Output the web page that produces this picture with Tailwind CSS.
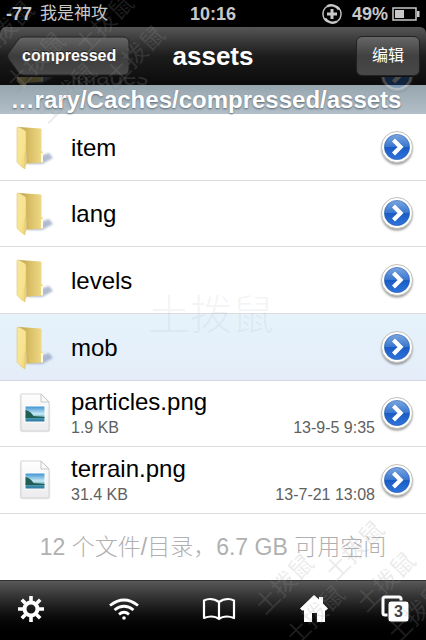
<!DOCTYPE html>
<html lang="zh-CN">
<head>
<meta charset="utf-8">
<meta name="viewport" content="width=device-width, initial-scale=1">
<title>assets</title>
<script src="https://cdn.jsdelivr.net/npm/@tailwindcss/browser@4"></script>
</head>
<body class="bg-white font-['Liberation_Sans','Noto_Sans_CJK_SC',sans-serif]">
<svg class="absolute size-0" aria-hidden="true">
  <defs>
    <linearGradient id="front" x1="0" y1="0" x2="1" y2="1"><stop offset="0" stop-color="#f6e6a0"/><stop offset=".6" stop-color="#f8e48e"/><stop offset="1" stop-color="#ecd072"/></linearGradient>
    <linearGradient id="back" x1="0" y1="0" x2="1" y2="0"><stop offset="0" stop-color="#b89c48"/><stop offset=".45" stop-color="#d9bf66"/><stop offset="1" stop-color="#f1dc8a"/></linearGradient>
    <linearGradient id="blue" x1="0" y1="0" x2="0" y2="1"><stop offset="0" stop-color="#7ba6df"/><stop offset=".48" stop-color="#3b78cf"/><stop offset=".52" stop-color="#1b5cc4"/><stop offset="1" stop-color="#2e74dc"/></linearGradient>
    <linearGradient id="page" x1="0" y1="0" x2="0" y2="1"><stop offset="0" stop-color="#fefefe"/><stop offset="1" stop-color="#ececee"/></linearGradient>
    <linearGradient id="sky" x1="0" y1="0" x2="0" y2="1"><stop offset="0" stop-color="#3f93d2"/><stop offset=".5" stop-color="#c9eaf4"/><stop offset=".75" stop-color="#4e9db0"/><stop offset="1" stop-color="#2774a0"/></linearGradient>
    <filter id="soft" x="-30%" y="-30%" width="160%" height="160%"><feGaussianBlur stdDeviation="1.2"/></filter>
    <symbol id="folder" viewBox="0 0 40 44">
      <path d="M10 38l16 0 11-6-4-5-6 2z" fill="#8f9fbd" opacity=".7" filter="url(#soft)"/>
      <path d="M3 1l21.500 1.500q1 0 1 1V25l1.500 1v10.500L8 38z" fill="url(#back)"/>
      <path d="M25 27h2v9l-2 .5z" fill="#fffbe8"/>
      <path d="M1 2q0-1.500 2-1l6 3.500q1 .7 1 2.500v19l-1 2v15q-5-3-8-7z" fill="url(#front)" stroke="#dfc670" stroke-width=".6"/>
      <path d="M9 28l1.500-1.500V38L9 42z" fill="#e3cda0"/>
    </symbol>
    <symbol id="picture" viewBox="0 0 32 42">
      <path d="M2 2h20l8 8v28H2z" fill="#888" opacity=".5" filter="url(#soft)"/>
      <path d="M2 1h20l8 8v29H2z" fill="url(#page)" stroke="#cfcfd2" stroke-width=".8"/>
      <path d="M22 1v8h8z" fill="#fafafa" stroke="#bbb" stroke-width=".8"/>
      <path d="M5.500 12.500h21v17h-21z" fill="#fff"/>
      <path d="M6.500 13.500h19v15h-19z" fill="url(#sky)"/>
      <path d="M6.500 17q5 1 8 6l11 1v1h-19z" fill="#245d54"/>
    </symbol>
    <symbol id="go" viewBox="0 0 36 38">
      <circle cx="18" cy="20" r="15.500" fill="#555" opacity=".6" filter="url(#soft)"/>
      <circle cx="18" cy="18" r="15.500" fill="#fff" stroke="#c3c1bb" stroke-width="1"/>
      <circle cx="18" cy="18" r="12.600" fill="url(#blue)" stroke="#255bac" stroke-width=".6"/>
      <path d="M14.500 11l7 7-7 7" fill="none" stroke="#fff" stroke-width="4.200"/>
    </symbol>
  </defs>
</svg>

<div class="relative flex min-h-screen flex-col overflow-hidden">
  <div class="grid h-[27px] shrink-0 grid-cols-[1fr_auto_1fr] items-center bg-black px-1.5 text-lg leading-none font-bold text-[#c8c8c8]">
    <div class="flex items-center gap-2"><span>-77</span><span class="text-[17px] leading-6 font-normal">我是神攻</span></div>
    <time>10:16</time>
    <div class="flex items-center justify-end">
      <svg class="mr-2.5 size-5" viewBox="0 0 20 20" fill="none" stroke="#c8c8c8"><path d="M5 2.500a9 9 0 0 0 0 15M15 17.500a9 9 0 0 0 0-15" stroke-width="1.400"/><path d="M5 2.500a9 9 0 0 1 12 3M15 17.500a9 9 0 0 1-12-3" stroke-width="2.400"/><path d="M10 5v10M5 10h10" stroke-width="3"/></svg>
      <span>49%</span>
      <svg class="ml-1 h-3.5 w-7" viewBox="0 0 28 14"><path d="M1 1h23v12H1z" fill="none" stroke="#c8c8c8" stroke-width="1.500"/><path d="M3 3h9v8H3zM25 4h2.500v6H25z" fill="#c8c8c8"/></svg>
    </div>
  </div>

  <div class="shrink-0 bg-black">
  <header class="grid h-[58px] grid-cols-[1fr_auto_1fr] items-center rounded-t-md bg-linear-to-b from-[#565656] via-[#1c1c1c] via-50% to-[#0b0b0b] px-1.5">
    <button type="button" class="relative flex h-10 w-[124px] items-center pl-4 text-base font-bold text-white">
      <svg class="absolute inset-0 size-full" viewBox="0 0 124 40" preserveAspectRatio="none" aria-hidden="true">
        <defs><linearGradient id="btn" x1="0" y1="0" x2="0" y2="1"><stop offset="0" stop-color="#666"/><stop offset=".5" stop-color="#3c3c3c"/><stop offset="1" stop-color="#494949"/></linearGradient></defs>
        <path d="M17 1h100q6 0 6 6v26q0 6-6 6H17q-3 0-5-3L2 22q-1-2 0-4L12 4q2-3 5-3z" fill="url(#btn)" stroke="#222"/>
      </svg>
      <span class="relative text-shadow-[0_-1px_0_#222]">compressed</span>
    </button>
    <h1 class="text-[26px] leading-8 font-bold text-white">assets</h1>
    <button type="button" class="h-10 w-16 justify-self-end rounded-md border border-[#222] bg-linear-to-b from-[#666] via-[#414141] to-[#484848] text-base text-white">编辑</button>
  </header>
  </div>

  <div class="relative h-[29px] shrink-0 bg-linear-to-b from-[#97a5af] to-[#b2bfc8]">
    <div class="absolute inset-x-0 -top-2 h-5 overflow-hidden opacity-25" aria-hidden="true">
      <div class="absolute -top-4 left-[71px] text-2xl leading-8 text-[#888]">images</div>
      <svg class="absolute -top-8 left-4 h-11 w-10"><use href="#folder"/></svg>
      <svg class="absolute -top-5 right-[11px] h-[38px] w-9"><use href="#go"/></svg>
    </div>
    <p class="relative pr-3.5 text-center text-2xl leading-[30px] font-bold whitespace-nowrap text-white text-shadow-[0_1px_2px_#5c6872]">…rary/Caches/compressed/assets</p>
  </div>

  <ul class="grid flex-1 auto-rows-fr text-black">
    <li class="flex items-center border-b border-[#dcdcdc] pt-0.5 pr-[11px] pl-4">
      <svg class="mr-[15px] h-11 w-10"><use href="#folder"/></svg>
      <span class="flex-1 text-2xl">item</span>
      <button type="button" aria-label="item"><svg class="h-[38px] w-9"><use href="#go"/></svg></button>
    </li>
    <li class="flex items-center border-b border-[#dcdcdc] pt-0.5 pr-[11px] pl-4">
      <svg class="mr-[15px] h-11 w-10"><use href="#folder"/></svg>
      <span class="flex-1 text-2xl">lang</span>
      <button type="button" aria-label="lang"><svg class="h-[38px] w-9"><use href="#go"/></svg></button>
    </li>
    <li class="flex items-center border-b border-[#dcdcdc] pt-0.5 pr-[11px] pl-4">
      <svg class="mr-[15px] h-11 w-10"><use href="#folder"/></svg>
      <span class="flex-1 text-2xl">levels</span>
      <button type="button" aria-label="levels"><svg class="h-[38px] w-9"><use href="#go"/></svg></button>
    </li>
    <li class="flex items-center border-b border-[#d3d8df] bg-linear-to-b from-[#e6f3fb] to-[#e4edf9] pt-0.5 pr-[11px] pl-4">
      <svg class="mr-[15px] h-11 w-10"><use href="#folder"/></svg>
      <span class="flex-1 text-2xl">mob</span>
      <button type="button" aria-label="mob"><svg class="h-[38px] w-9"><use href="#go"/></svg></button>
    </li>
    <li class="flex items-center border-b border-[#dcdcdc] pt-0.5 pr-[11px] pl-[19px]">
      <svg class="mr-5 h-[42px] w-8"><use href="#picture"/></svg>
      <div class="flex-1">
        <div class="text-2xl leading-7">particles.png</div>
        <div class="flex justify-between pr-1 text-base text-[#606060]"><span>1.9 KB</span><time>13-9-5 9:35</time></div>
      </div>
      <button type="button" aria-label="particles.png"><svg class="h-[38px] w-9"><use href="#go"/></svg></button>
    </li>
    <li class="flex items-center border-b border-[#dcdcdc] pt-0.5 pr-[11px] pl-[19px]">
      <svg class="mr-5 h-[42px] w-8"><use href="#picture"/></svg>
      <div class="flex-1">
        <div class="text-2xl leading-7">terrain.png</div>
        <div class="flex justify-between pr-1 text-base text-[#606060]"><span>31.4 KB</span><time>13-7-21 13:08</time></div>
      </div>
      <button type="button" aria-label="terrain.png"><svg class="h-[38px] w-9"><use href="#go"/></svg></button>
    </li>
  </ul>

  <p class="flex h-[66px] shrink-0 items-center justify-center text-[23px] font-light whitespace-nowrap text-[#b0b0b0]">12 个文件/目录，6.7 GB 可用空间</p>

  <nav class="flex h-[60px] shrink-0 items-center justify-between border-t border-[#333] bg-linear-to-b from-[#585858] via-[#111] via-55% to-black px-[15px] pb-1">
    <button type="button" aria-label="设置"><svg class="h-8 w-8" viewBox="0 0 32 32" fill="none" stroke="#fff"><circle cx="16" cy="16" r="6.500" stroke-width="4"/><path d="M16 3v5M16 24v5M3 16h5M24 16h5M6.800 6.800l3.500 3.500M21.700 21.700l3.500 3.500M6.800 25.200l3.500-3.500M21.700 10.300l3.500-3.500" stroke-width="3.600"/></svg></button>
    <button type="button" aria-label="Wi-Fi" class="pl-3"><svg class="h-8 w-8" viewBox="0 0 32 32" fill="none" stroke="#fff" stroke-width="2.800"><path d="M2 12.500q14-11 28 0M6.500 17q9.500-7.500 19 0M11 21.300q5-4 10 0"/><circle cx="16" cy="25" r="1.800" fill="#fff" stroke="none"/></svg></button>
    <button type="button" aria-label="书签" class="pl-3"><svg class="h-8 w-9" viewBox="0 0 36 32" fill="none" stroke="#fff" stroke-width="2.200" stroke-linejoin="round"><path d="M18 9Q14 6 9 6 6 6 3 7.500V25q4-1.500 7-1.500 5 0 8 2.500 3-2.500 8-2.500 3 0 7 1.500V7.500Q30 6 27 6q-5 0-9 3zv17"/></svg></button>
    <button type="button" aria-label="主页" class="pl-3"><svg class="h-8 w-8" viewBox="0 0 32 32" fill="#fff"><path d="M16 2l5 4.500V4h4v6.500l5 5-2 2h-1V29h-8v-9h-5v9H6V17.500H4l-2-2z"/></svg></button>
    <button type="button" aria-label="窗口" class="relative h-8 w-8">
      <svg class="size-full" viewBox="0 0 32 32"><rect x="4" y="4" width="18" height="18" rx="2" fill="none" stroke="#fff" stroke-width="3"/><rect x="9" y="8" width="21" height="21" rx="3" fill="#fff" stroke="#222"/></svg>
      <span class="absolute top-2 left-[9px] w-[21px] text-center text-base leading-[21px] font-bold text-[#444]">3</span>
    </button>
  </nav>

  <div class="pointer-events-none absolute top-[290px] left-[148px] text-[42px] leading-[52px] font-light text-[#8090a0]/10 select-none" aria-hidden="true">土拨鼠</div>
  <div class="pointer-events-none absolute top-1 left-0 grid -rotate-45 gap-4 text-2xl leading-7 text-[#999]/20 select-none" aria-hidden="true"><span>土拨鼠</span><span>土拨鼠</span><span>土拨鼠</span></div>
  <div class="pointer-events-none absolute top-1 left-[84px] grid -rotate-45 gap-4 text-2xl leading-7 text-[#999]/20 select-none" aria-hidden="true"><span>土拨鼠</span><span>土拨鼠</span></div>
  <div class="pointer-events-none absolute right-1 bottom-0 grid -rotate-45 gap-4 text-2xl leading-7 text-[#999]/20 select-none" aria-hidden="true"><span>土拨鼠</span><span>土拨鼠</span><span>土拨鼠</span></div>
  <div class="pointer-events-none absolute right-[90px] bottom-1 grid -rotate-45 gap-4 text-2xl leading-7 text-[#999]/20 select-none" aria-hidden="true"><span>土拨鼠</span><span>土拨鼠</span></div>
</div>
</body>
</html>
